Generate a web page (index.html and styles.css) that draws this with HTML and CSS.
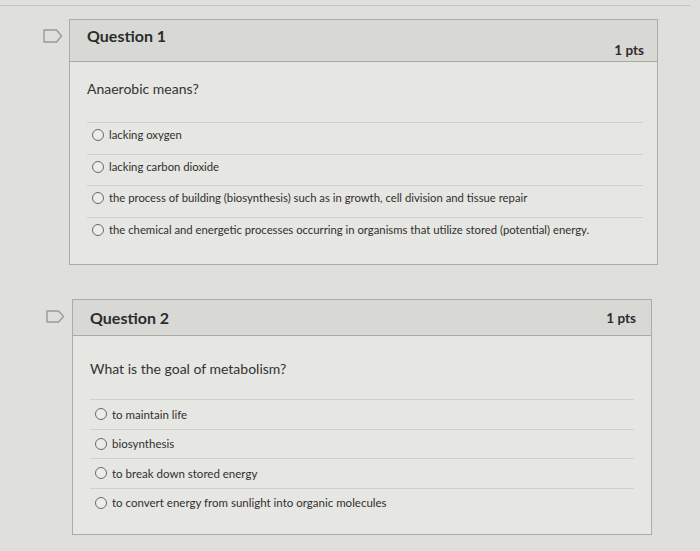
FILE: index.html
```html
<!DOCTYPE html>
<html>
<head>
<meta charset="utf-8">
<link rel="stylesheet" href="styles.css">
</head>
<body>
<div class="page">
  <div class="topline"></div>

  <div class="qrow q1">
    <div class="flag">
      <svg width="20" height="14" viewBox="0 0 20 14"><path d="M1 1 H13.5 L18.5 7 L13.5 13 H1 Z" fill="none" stroke="#9a9a96" stroke-width="1.4" stroke-linejoin="round"/></svg>
    </div>
    <div class="card">
      <div class="head">
        <span class="title">Question 1</span>
        <span class="pts">1 pts</span>
      </div>
      <div class="body">
        <p class="prompt">Anaerobic means?</p>
        <div class="answers">
          <div class="ans"><span class="radio"></span><span>lacking oxygen</span></div>
          <div class="ans"><span class="radio"></span><span>lacking carbon dioxide</span></div>
          <div class="ans"><span class="radio"></span><span>the process of building (biosynthesis) such as in growth, cell division and tissue repair</span></div>
          <div class="ans"><span class="radio"></span><span>the chemical and energetic processes occurring in organisms that utilize stored (potential) energy.</span></div>
        </div>
      </div>
    </div>
  </div>

  <div class="qrow q2">
    <div class="flag">
      <svg width="19" height="13" viewBox="0 0 19 13"><path d="M1 1 H12.5 L17.5 6.5 L12.5 12 H1 Z" fill="none" stroke="#9a9a96" stroke-width="1.4" stroke-linejoin="round"/></svg>
    </div>
    <div class="card">
      <div class="head">
        <span class="title">Question 2</span>
        <span class="pts">1 pts</span>
      </div>
      <div class="body">
        <p class="prompt">What is the goal of metabolism?</p>
        <div class="answers">
          <div class="ans"><span class="radio"></span><span>to maintain life</span></div>
          <div class="ans"><span class="radio"></span><span>biosynthesis</span></div>
          <div class="ans"><span class="radio"></span><span>to break down stored energy</span></div>
          <div class="ans"><span class="radio"></span><span>to convert energy from sunlight into organic molecules</span></div>
        </div>
      </div>
    </div>
  </div>
</div>
</body>
</html>
```

FILE: styles.css
```css
html, body {
  margin: 0;
  padding: 0;
}
body {
  background: #dfdfdb;
  font-family: Lato, "Open Sans", sans-serif;
  color: #343434;
  width: 700px;
  height: 551px;
  overflow: hidden;
}
.page {
  display: flex;
  flex-direction: column;
  padding-top: 5px;
}
.topline {
  height: 0;
  border-top: 1px solid #c4c4c0;
  margin-right: 10px;
}
.qrow {
  display: flex;
  align-items: flex-start;
}
.q1 {
  margin-top: 13px;
  padding-left: 43px;
}
.q2 {
  margin-top: 34px;
  padding-left: 46px;
}
.flag {
  width: 26px;
  flex: none;
  display: flex;
}
.q1 .flag { padding-top: 10px; }
.q2 .flag { padding-top: 11px; }
.card {
  background: #e6e6e2;
  border: 1px solid #ababa7;
  box-sizing: border-box;
}
.q1 .card { width: 589px; }
.q2 .card { width: 580px; }
.head {
  background: #d8d8d4;
  border-bottom: 1px solid #a9a9a5;
  display: flex;
  justify-content: space-between;
  align-items: center;
  box-sizing: border-box;
}
.q1 .head {
  height: 42px;
  padding: 0 13px 0 17px;
}
.q1 .title { margin-top: -10px; }
.q1 .pts { margin-top: 18px; }
.q2 .head {
  height: 36px;
  padding: 0 15px 0 17px;
}
.title {
  font-weight: 700;
  font-size: 16px;
  color: #2c2c2c;
}
.pts {
  font-weight: 700;
  font-size: 13.5px;
  color: #2c2c2c;
}
.body {
  display: flex;
  flex-direction: column;
}
.q1 .body { padding: 17px 14px 16px 17px; }
.q2 .body { padding: 23px 17px 17px 17px; }
.prompt {
  margin: 0;
  font-size: 14px;
  line-height: 20px;
  color: #333;
}
.q1 .prompt { margin-bottom: 23px; }
.q2 .prompt { margin-bottom: 20px; }
.answers {
  display: flex;
  flex-direction: column;
}
.ans {
  display: flex;
  gap: 5px;
  border-top: 1px solid #cfcfcb;
  padding-left: 5px;
  color: #303030;
  box-sizing: border-box;
}
.q1 .ans {
  height: 31.5px;
  font-size: 11.3px;
  line-height: 14px;
  align-items: flex-start;
  padding-top: 5px;
}
.q1 .ans .radio { margin-top: 1px; }
.q2 .ans {
  height: 29.5px;
  font-size: 11.5px;
  align-items: center;
}
.radio {
  width: 12px;
  height: 12px;
  border: 1.5px solid #6a6a6a;
  border-radius: 50%;
  box-sizing: border-box;
  flex: none;
  background: #ececea;
}
```
